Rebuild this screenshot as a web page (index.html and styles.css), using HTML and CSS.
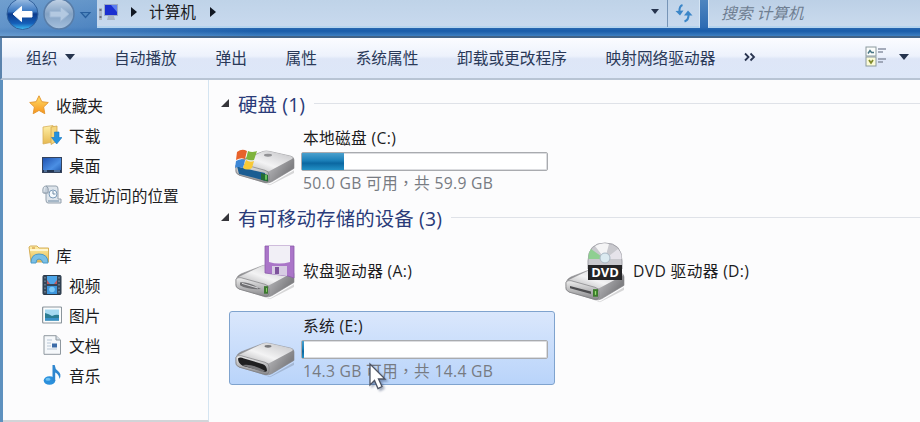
FILE: index.html
```html
<!DOCTYPE html>
<html lang="zh-CN">

<head>
    <meta charset="UTF-8">
    <meta name="viewport" content="width=device-width, initial-scale=1.0">
    <title>计算机</title>
    <link rel="stylesheet" href="styles.css">
</head>

<body>
    <!-- shared gradients and the drive body -->
    <svg class="defs" width="0" height="0">
        <defs>
            <linearGradient id="metal-top" x1="0" y1="1" x2="1" y2="0">
                <stop offset="0" stop-color="#a9a9ab" />
                <stop offset="0.45" stop-color="#f3f3f4" />
                <stop offset="1" stop-color="#c2c2c5" />
            </linearGradient>
            <linearGradient id="metal-side" x1="0" y1="0" x2="1" y2="0.4">
                <stop offset="0" stop-color="#717174" />
                <stop offset="0.5" stop-color="#c9c9cc" />
                <stop offset="1" stop-color="#808083" />
            </linearGradient>
            <linearGradient id="metal-front" x1="0" y1="0" x2="0" y2="1">
                <stop offset="0" stop-color="#efefef" />
                <stop offset="1" stop-color="#87878a" />
            </linearGradient>
            <linearGradient id="gold" x1="0" y1="0" x2="0" y2="1">
                <stop offset="0" stop-color="#fff0a8" />
                <stop offset="1" stop-color="#e6b850" />
            </linearGradient>
            <linearGradient id="star" x1="0" y1="0" x2="0" y2="1">
                <stop offset="0" stop-color="#ffe06a" />
                <stop offset="1" stop-color="#f7941c" />
            </linearGradient>
            <linearGradient id="blue" x1="0" y1="0" x2="1" y2="1">
                <stop offset="0" stop-color="#1d4fae" />
                <stop offset="0.6" stop-color="#4b8fe4" />
                <stop offset="1" stop-color="#1c56ae" />
            </linearGradient>
            <linearGradient id="nav-blue" x1="0" y1="0" x2="0" y2="1">
                <stop offset="0" stop-color="#9fc0e4" />
                <stop offset="0.42" stop-color="#3a78c2" />
                <stop offset="0.5" stop-color="#0b3b8c" />
                <stop offset="0.8" stop-color="#155fb8" />
                <stop offset="1" stop-color="#3fc0f4" />
            </linearGradient>
            <linearGradient id="nav-gray" x1="0" y1="0" x2="0" y2="1">
                <stop offset="0" stop-color="#c3d3e6" />
                <stop offset="0.5" stop-color="#83a2c4" />
                <stop offset="1" stop-color="#a5c0dd" />
            </linearGradient>
            <g id="drive">
                <path d="M3 48 L36 60 L60 45 L60 48 L36 61Z" fill="#000" opacity=".15" />
                <path d="M2 40 Q3 36 7 34 L29 25 Q32 24 36 25 L57 30 Q60 31 60 34 L60 43 L38 57 Q35 59 31 58 L5 50 Q1 48 2 44Z" fill="url(#metal-side)" stroke="#868689" stroke-width=".6" />
                <path d="M3 38 L29 25 Q32 24 36 25 L57 30 Q60 31 58 33 L37 45 Q34 47 30 46Z" fill="url(#metal-top)" />
                <path d="M2 40 Q3 37 7 38 L31 45 Q35 46 35 50 L35 55 Q35 58 31 58 L5 50 Q1 48 2 44Z" fill="url(#metal-front)" stroke="#7c7c7f" stroke-width=".7" />
            </g>
        </defs>
    </svg>

    <div class="window">
        <header class="titlebar">
            <svg class="nav-buttons" width="97" height="32" viewBox="0 0 97 32">
                <circle cx="22.500" cy="14" r="15.500" fill="url(#nav-blue)" stroke="#32619c" />
                <path d="M13 14 L21.500 6.500 L21.500 11.500 L32 11.500 L32 17 L21.500 17 L21.500 21.500Z" fill="#fff" stroke="#fff" stroke-linejoin="round" />
                <circle cx="59" cy="14" r="15" fill="url(#nav-gray)" stroke="#597da7" stroke-width="1.500" />
                <path d="M69 14 L60.500 6.500 L60.500 11.500 L50 11.500 L50 17 L60.500 17 L60.500 21.500Z" fill="#b3c9e1" stroke="#9fb9d6" />
                <path d="M81 12.500 H90 L85.500 17.500Z" fill="#4f87be" stroke="#285f9e" stroke-width="1.200" />
            </svg>
            <div class="address">
                <svg class="computer-icon" width="22" height="22" viewBox="0 0 22 22">
                    <rect x="1" y="7" width="3" height="12" fill="#aeb6c4" />
                    <path d="M1.500 9 h2 M1.500 16 h2" stroke="#505a6c" stroke-width="1.500" />
                    <rect x="6" y="3" width="14" height="12" fill="#9ca9c4" />
                    <rect x="7" y="4" width="12" height="10" fill="#1b2fd0" />
                    <path d="M13 4 H19 V11Z" fill="#5b7df0" />
                    <path d="M10 15 H16 L17 19 H9Z" fill="#a9b3c2" />
                </svg>
                <span class="arrow-right"></span>
                <span class="crumb">计算机</span>
                <span class="arrow-right"></span>
                <span class="arrow-down address-drop"></span>
                <span class="refresh">
                    <svg width="18" height="20" viewBox="0 0 18 20" fill="none" stroke="#3b86c8" stroke-width="2">
                        <path d="M7.500 2 Q4 3 4.500 9" />
                        <path d="M0.500 8 L5 12.500 L8.500 7.500Z" fill="#3b86c8" stroke="none" />
                        <path d="M9.500 18.500 Q14 17 13.500 11" />
                        <path d="M9 12.500 L13 7.500 L17.500 12.500Z" fill="#3b86c8" stroke="none" />
                    </svg>
                </span>
            </div>
            <div class="search">搜索 计算机</div>
        </header>

        <nav class="toolbar">
            <span class="organize">组织 <i class="arrow-down"></i></span>
            <span>自动播放</span>
            <span>弹出</span>
            <span>属性</span>
            <span>系统属性</span>
            <span>卸载或更改程序</span>
            <span>映射网络驱动器</span>
            <svg class="more" width="12" height="10" viewBox="0 0 12 10" fill="none" stroke="#2a3550" stroke-width="1.800">
                <path d="M1 1.500 L4.500 5 L1 8.500 M6.500 1.500 L10 5 L6.500 8.500" />
            </svg>
            <span class="view">
                <svg width="22" height="22" viewBox="0 0 22 22">
                    <rect x="1" y="1" width="10" height="9" fill="#fbfdfb" stroke="#8b9a9e" />
                    <rect x="1" y="11" width="10" height="9" fill="#fbfbd8" stroke="#8b9a9e" />
                    <path d="M3 7.500 L5 4.500 L6.500 6.500 H9" stroke="#477584" stroke-width="1.500" fill="none" />
                    <path d="M4 14 L6 17 L8 14" stroke="#808a2c" stroke-width="1.800" fill="none" />
                    <path d="M13 3 H21 M13 6 H18 M13 13 H21 M13 16 H18" stroke="#8b93a4" stroke-width="1.300" />
                </svg>
                <i class="arrow-down"></i>
            </span>
        </nav>

        <main class="content">
            <aside class="sidebar">
                <ul class="tree">
                    <li class="root">
                        <svg width="20" height="20" viewBox="0 0 20 20">
                            <path d="M10 0.800 L12.800 6.700 L19.300 7.500 L14.600 12 L15.800 18.700 L10 15.400 L4.200 18.700 L5.400 12 L0.700 7.500 L7.200 6.700Z" fill="url(#star)" stroke="#e59a35" />
                        </svg>
                        收藏夹
                    </li>
                    <li>
                        <svg width="20" height="20" viewBox="0 0 20 20">
                            <path d="M1 2 L11 0.500 V17 L1 19Z" fill="url(#gold)" stroke="#d8b05a" stroke-width=".8" />
                            <path d="M9 2 L15 1 V16 L9 19.500Z" fill="#f5d67e" stroke="#d0a64c" stroke-width=".8" />
                            <path d="M12.500 7 H17 V12.500 H20 L14.700 19 L9.500 12.500 H12.500Z" fill="#2391de" stroke="#1976bf" stroke-width=".6" />
                        </svg>
                        下载
                    </li>
                    <li>
                        <svg width="20" height="20" viewBox="0 0 20 20">
                            <rect x="0.500" y="2.500" width="19" height="15" fill="url(#blue)" stroke="#35435c" />
                            <path d="M1 16 H19" stroke="#233653" stroke-width="2" />
                            <path d="M2 16 H5 M12 16 H18" stroke="#7faae0" />
                        </svg>
                        桌面
                    </li>
                    <li>
                        <svg width="20" height="20" viewBox="0 0 20 20">
                            <path d="M4 1 H14 Q16 1 16 4 V14 H19 V18 H6 Q4 18 4 15 V8 H1 Q0 1 4 1Z" fill="#dde4eb" stroke="#93a0ad" />
                            <path d="M4 1 Q7 2 6 8 H2" fill="#c4ced9" stroke="#8c9aa9" />
                            <circle cx="11" cy="9" r="4" fill="#f4f9fd" stroke="#7d9cb9" />
                            <path d="M11 6 V9 H13.500 M6 16 H17" stroke="#6e8aa4" fill="none" />
                        </svg>
                        最近访问的位置
                    </li>
                </ul>
                <ul class="tree">
                    <li class="root library">
                        <svg width="22" height="20" viewBox="0 0 22 20">
                            <path d="M1 2 L2.500 1 H9 L11 3 H20.500 V17 H3Z" fill="url(#gold)" stroke="#d5ae58" />
                            <path d="M2 5 H20" stroke="#fff6cf" stroke-width="2" />
                            <path d="M3 18 Q3 9 11 9 Q20 9 20 18 H15 Q14 14 11 14 Q8 14 8 18Z" fill="#79bfe6" stroke="#4a9ac9" />
                            <path d="M4 3 H7" stroke="#cc8a36" />
                        </svg>
                        库
                    </li>
                    <li>
                        <svg width="20" height="20" viewBox="0 0 20 20">
                            <rect x="1" y="0.500" width="18" height="19" rx="1" fill="#36475a" stroke="#293848" />
                            <rect x="5" y="1" width="10" height="8" fill="#4ca5e8" />
                            <rect x="5" y="11" width="10" height="8" fill="#3d96dd" />
                            <path d="M5 5 L8 9 H5Z M15 5 L12 9 H15Z" fill="#c5585b" />
                            <path d="M3 2 V19 M17 2 V19" stroke="#7d90a2" stroke-width="1.200" stroke-dasharray="1.500 2" />
                            <circle cx="10" cy="14.500" r="2.800" fill="#7cc9f8" />
                        </svg>
                        视频
                    </li>
                    <li>
                        <svg width="20" height="20" viewBox="0 0 20 20">
                            <rect x="0.600" y="2" width="19" height="16" rx="1" fill="#fafcfd" stroke="#8c969d" stroke-width="1.200" />
                            <rect x="3" y="4.500" width="14" height="11" fill="#a5d9f2" />
                            <path d="M3 8 Q7 9 10 11 Q14 9 17 10 V15.500 H3Z" fill="#2b7d94" />
                            <path d="M3 13 H17 V15.500 H3Z" fill="#3a91c9" />
                        </svg>
                        图片
                    </li>
                    <li>
                        <svg width="20" height="20" viewBox="0 0 20 20">
                            <path d="M2 0.700 H14 L18.500 5 V19.300 H2Z" fill="#f5f8fb" stroke="#8f989f" />
                            <path d="M14 0.700 V5 H18.500" fill="#d7e0e8" stroke="#8f989f" />
                            <path d="M5 5 H10 M5 8 H9 M5 11 H9 M5 14 H15" stroke="#b9c7d6" />
                            <rect x="10" y="8.500" width="5" height="4" fill="#3b6ba8" />
                        </svg>
                        文档
                    </li>
                    <li>
                        <svg width="20" height="20" viewBox="0 0 20 20">
                            <ellipse cx="7.500" cy="15.500" rx="5.800" ry="4.300" fill="#2b90dc" />
                            <path d="M10.500 0 H12.700 Q13 4 16 6 Q20 9 17.500 14 Q17 9 13.200 7.500 V16 H10.500Z" fill="#2e86cf" />
                            <ellipse cx="6" cy="14.200" rx="2.500" ry="1.500" fill="#6fc2f3" />
                        </svg>
                        音乐
                    </li>
                </ul>
            </aside>

            <section class="drives">
                <h2 class="group-title"><i class="expander"></i>硬盘 (1)</h2>
                <div class="group">
                    <div class="drive">
                        <svg class="drive-icon" width="62" height="64" viewBox="0 0 62 64">
                            <g transform="scale(1 0.940)">
                                <use href="#drive" />
                                <path d="M3 41 L31 48 V56 L5 49Z" fill="#1b5d92" />
                                <path d="M27 48 L34 50 V57 L27 55Z" fill="#246d35" />
                                <path d="M32 50 V55" stroke="#7fe068" stroke-width="1.500" />
                                <ellipse cx="34" cy="29" rx="4" ry="1.500" fill="#929295" />
                            </g>
                            <path d="M3 24 Q8 20 13 23 L11 31 Q7 29 2 32Z" fill="#e8622b" />
                            <path d="M14 23 Q18 25 23 23 L20 32 Q16 33 12 31Z" fill="#7fb43d" />
                            <path d="M2 33 Q7 30 11 32 L9 40 Q4 38 1 40Z" fill="#3d87d6" />
                            <path d="M12 32 Q16 35 20 33 L18 40 Q13 43 9 40Z" fill="#f8c936" />
                        </svg>
                        <div class="info">
                            <span class="name">本地磁盘 (C:)</span>
                            <div class="bar"><div class="used" style="width: 17%"></div></div>
                            <span class="space">50.0 GB 可用<span class="comma" lang="zh-TW">，</span>共 59.9 GB</span>
                        </div>
                    </div>
                </div>

                <h2 class="group-title"><i class="expander"></i>有可移动存储的设备 (3)</h2>
                <div class="group">
                    <div class="drive">
                        <svg class="drive-icon" width="62" height="64" viewBox="0 0 62 64">
                            <g transform="translate(0 3) scale(1 0.940)">
                                <use href="#drive" />
                                <path d="M6 43 Q14 42 27 50 Q14 51 6 46Z" fill="#707073" />
                                <path d="M8 44 L24 49" stroke="#d9d9db" />
                                <rect x="30" y="47" width="4" height="8" fill="#3d7831" />
                                <path d="M32.500 49 V53" stroke="#8bd566" />
                            </g>
                            <path d="M31 7 H60 V39 L54 37 L31 34Z" fill="#aa75c8" stroke="#8a5ba9" stroke-width=".8" />
                            <path d="M35 7 H56 V23 Q45 26 35 23Z" fill="#f1eff6" />
                            <path d="M38 27 H53 V37 L38 35Z" fill="#d7cce3" />
                            <rect x="41" y="28" width="4" height="7" fill="#7e539c" />
                        </svg>
                        <div class="info"><span class="name">软盘驱动器 (A:)</span></div>
                    </div>
                    <div class="drive">
                        <svg class="drive-icon" width="62" height="64" viewBox="0 0 62 64">
                            <g transform="translate(0 6) scale(1 0.940)">
                                <use href="#drive" />
                                <path d="M6 43.500 L27 49.500 V52 L6 46Z" fill="#4d4d50" />
                                <rect x="29" y="47" width="5" height="8" fill="#3b7b2c" />
                                <path d="M31.500 49 V53" stroke="#96de70" stroke-width="1.300" />
                            </g>
                            <g transform="translate(0 2)">
                                <path d="M24 20 Q24 2 41 2 Q58 2 58 20 V28 H24Z" fill="#c9c9ce" stroke="#a0a0a7" />
                                <path d="M41 18 L27 8 Q24 12 24.500 18Z" fill="#8fcf91" />
                                <path d="M41 18 L31 5 Q38 1 45 3Z" fill="#f4f4f5" />
                                <path d="M41 18 L54 8 Q58 12 57.500 18Z" fill="#e6e3ea" />
                                <circle cx="41" cy="17" r="5" fill="#dbeaf0" stroke="#a9b8c4" />
                                <rect x="24" y="24" width="34" height="15" fill="#242426" />
                                <text class="dvd-label" x="41" y="36" text-anchor="middle">DVD</text>
                            </g>
                        </svg>
                        <div class="info"><span class="name">DVD 驱动器 (D:)</span></div>
                    </div>
                    <div class="drive selected">
                        <svg class="drive-icon" width="62" height="64" viewBox="0 0 62 64">
                            <g transform="translate(0 4) scale(1 0.940)">
                                <use href="#drive" />
                                <path d="M4 41 Q6 39 10 41 L29 47 Q33 49 33 54 Q32 56 28 54 L9 49 Q4 46 4 41Z" fill="#1f1f20" />
                                <path d="M8 48 Q18 46 31 54 L28 55Z" fill="#77777a" />
                                <ellipse cx="34" cy="28" rx="3.500" ry="1.500" fill="#77777a" />
                            </g>
                        </svg>
                        <div class="info">
                            <span class="name">系统 (E:)</span>
                            <div class="bar"><div class="used" style="width: 0.8%"></div></div>
                            <span class="space">14.3 GB 可用<span class="comma" lang="zh-TW">，</span>共 14.4 GB</span>
                        </div>
                        <svg class="cursor" width="19" height="29" viewBox="0 0 19 29">
                            <path d="M2 2 V23 L6.500 18.500 L10 26.500 L14 24.500 L10.500 17 H17Z" fill="#fff" stroke="#4c5363" stroke-width="1.300" />
                        </svg>
                    </div>
                </div>
            </section>
        </main>
    </div>
</body>

</html>
```

FILE: styles.css
```css
* {
    box-sizing: border-box;
}

body {
    margin: 0;
    font-family: "Open Sans", "Noto Sans CJK SC", sans-serif;
    font-size: 15.7px;
    color: #1c1c1e;
    background: #fcfcfd;
    overflow: hidden;
}

svg {
    display: block;
    flex-shrink: 0;
}

.defs {
    position: absolute;
}

.window {
    display: flex;
    flex-direction: column;
    height: 422px;
}

/* title bar */
.titlebar {
    display: flex;
    flex-shrink: 0;
    align-items: flex-start;
    height: 38px;
    background: linear-gradient(90deg, rgba(140, 180, 220, 0.55), rgba(140, 180, 220, 0) 28%), linear-gradient(#4e85bf 0, #2e6cb3 27px, #195ca9 31px, #3e7fc1 36px);
    border-bottom: 2px solid #426387;
}

.address {
    display: flex;
    align-items: center;
    width: 603px;
    height: 28px;
    padding: 0 0 3px 1px;
    background: linear-gradient(#bfd3e8, #c8d9ee);
    border-bottom: 2px solid #b4d3ee;
    border-right: 1px solid #d5e5f4;
}

.arrow-right {
    margin-left: 10px;
    border: 5px solid transparent;
    border-left: 6px solid #111722;
    border-right: 0;
}

.computer-icon + .arrow-right {
    margin-left: 11px;
}

.arrow-down {
    display: inline-block;
    border: 5px solid transparent;
    border-top: 6px solid #26344e;
    border-bottom: 0;
}

.crumb {
    margin-left: 12px;
    line-height: 24px;
}

.crumb + .arrow-right {
    margin-left: 14px;
}

.address-drop {
    margin-left: auto;
    margin-right: 8px;
    border-width: 5px 4.5px 0;
}

.refresh {
    display: flex;
    justify-content: center;
    align-items: center;
    width: 32px;
    height: 28px;
    margin-bottom: -3px;
    padding-bottom: 1px;
    border-left: 1px solid #7795b7;
}

.search {
    flex: 1;
    height: 28px;
    margin-left: 8px;
    padding-left: 12px;
    line-height: 27px;
    font-style: italic;
    color: #6f7e91;
    background: linear-gradient(#bcd0e6, #c9daed);
    border-left: 1px solid #d5e5f4;
    border-bottom: 2px solid #b4d3ee;
}

/* command bar */
.toolbar {
    display: flex;
    flex-shrink: 0;
    align-items: center;
    gap: 38.7px;
    height: 42px;
    padding: 0 0 2px 24px;
    color: #2a3958;
    white-space: nowrap;
    background: linear-gradient(#fbfcff, #edf2fc 45%, #dee6f7 52%, #dde7f8);
    border-left: 2px solid #5b83ad;
    border-bottom: 2px solid #b8c4d4;
}

.organize {
    display: flex;
    align-items: center;
    gap: 8px;
}

.more {
    margin-left: -10px;
}

.view {
    display: flex;
    align-items: center;
    gap: 12px;
    margin-left: auto;
    margin-right: 11px;
}

.content {
    display: flex;
    flex: 1;
    border-left: 3px solid #5e91bf;
}

/* navigation pane */
.sidebar {
    width: 206px;
    padding-top: 10px;
    border-right: 1px solid #d4e4f1;
    border-bottom: 2px solid #d2d4d8;
}

.tree {
    margin: 0 0 30px;
    padding: 0;
    list-style: none;
}

.tree:last-child {
    margin-bottom: 0;
}

.tree li {
    display: flex;
    align-items: center;
    gap: 7px;
    height: 30px;
    padding-left: 39px;
}

.tree .root {
    padding-left: 26px;
}

.tree .library {
    gap: 6px;
    padding-left: 25px;
}

/* drive list */
.drives {
    flex: 1;
    padding: 9px 0 0 12px;
}

.group-title {
    display: flex;
    align-items: center;
    height: 28px;
    margin: 0;
    font-size: 19.4px;
    font-weight: normal;
    letter-spacing: 0.15px;
    color: #2a3b79;
    white-space: nowrap;
}

.group-title::after {
    content: "";
    flex: 1;
    height: 1px;
    margin-left: 9px;
    background: #dfe2e8;
}

.expander {
    width: 8px;
    height: 8px;
    margin-right: 9px;
    background: #35353a;
    clip-path: polygon(100% 0, 100% 100%, 0 100%);
}

.group {
    display: flex;
    flex-wrap: wrap;
    gap: 3px 4px;
    margin: 6px 0 6px 8px;
}

.group-title + .group:last-child {
    margin-top: 3px;
}

.drive {
    position: relative;
    display: flex;
    align-items: center;
    gap: 5px;
    width: 326px;
    height: 74px;
    padding-left: 4px;
    border: 1px solid transparent;
    border-radius: 3px;
}

.drive.selected {
    background: linear-gradient(#dae7fc, #b9d4fa);
    border-color: #7fa3ce;
}

.info {
    display: flex;
    flex-direction: column;
    width: 247px;
}

.name,
.space {
    padding-left: 2px;
    line-height: 22px;
    white-space: nowrap;
}

.name {
    letter-spacing: 0.35px;
}

.space {
    margin-top: 1px;
    letter-spacing: 0.3px;
    color: #777b82;
}

/* centred comma */
.comma {
    font-family: "Noto Sans CJK TC", sans-serif;
    line-height: 1;
}

.bar {
    height: 19px;
    margin-top: 3px;
    background: #fff;
    border: 1px solid #a9abaf;
    border-radius: 2px;
    box-shadow: inset 0 0 0 1px #dcdde0;
}

.used {
    height: 100%;
    background: linear-gradient(#4aa0cd, #1b7fb8 45%, #0b67a1 60%, #2391c6);
}

.dvd-label {
    font-family: "Open Sans", sans-serif;
    font-size: 13px;
    font-weight: bold;
    fill: #fff;
}

.cursor {
    position: absolute;
    left: 138px;
    top: 50px;
    filter: drop-shadow(2px 2px 1px rgba(30, 50, 90, 0.4));
}
```
